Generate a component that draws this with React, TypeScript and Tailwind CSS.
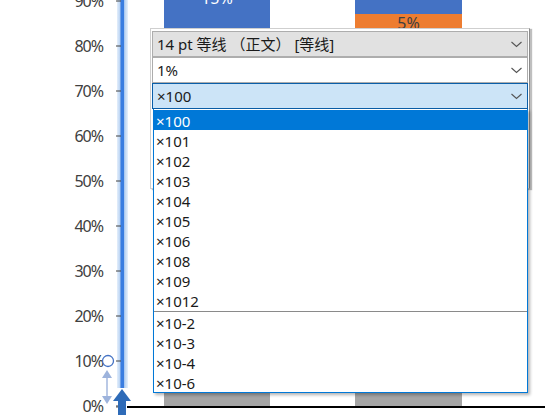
import React from 'react';

const axisLabels = ['90%', '80%', '70%', '60%', '50%', '40%', '30%', '20%', '10%', '0%'];
const upperItems = ['×100', '×101', '×102', '×103', '×104', '×105', '×106', '×108', '×109', '×1012'];
const lowerItems = ['×10-2', '×10-3', '×10-4', '×10-6'];

const uiFont = { fontFamily: '"Noto Sans", "Noto Sans CJK SC", sans-serif' };

function Chevron() {
  return (
    <svg width="11" height="7" viewBox="0 0 11 7" className="shrink-0">
      <polyline points="0.5,1 5.5,5.5 10.5,1" fill="none" stroke="#555" strokeWidth="1.1" />
    </svg>
  );
}

function AxisDecor() {
  // local x = page x - 104
  return (
    <svg width="24" height="415" viewBox="0 0 24 415" className="shrink-0 overflow-visible">
      <defs>
        <linearGradient id="band" x1="0" x2="1" y1="0" y2="0">
          <stop offset="0" stopColor="#e3eefb" />
          <stop offset="0.3" stopColor="#b6d1f2" />
          <stop offset="0.5" stopColor="#3d7fdf" />
          <stop offset="0.7" stopColor="#b6d1f2" />
          <stop offset="1" stopColor="#e8f1fc" />
        </linearGradient>
      </defs>
      <rect x="13" y="0" width="11" height="388" fill="url(#band)" />
      <rect x="16.5" y="0" width="3.5" height="388" fill="#3a7de0" />
      {axisLabels.map((l, i) => (
        <line key={l} x1="12" x2="17" y1={1 + 45 * i} y2={1 + 45 * i} stroke="#404040" strokeWidth="1" />
      ))}
      {/* resize handle */}
      <circle cx="4" cy="361" r="5.5" fill="white" stroke="#4472c4" strokeWidth="1.3" />
      <polygon points="3,370 -2,378 8,378" fill="#9db3dc" />
      <rect x="2.3" y="377" width="1.4" height="20" fill="#9db3dc" />
      <polygon points="3,404 -2,396 8,396" fill="#9db3dc" />
      {/* move arrow */}
      <polygon points="18,389 9,401 27,401" fill="#2e6bb8" />
      <rect x="14" y="400" width="8" height="15" fill="#2e6bb8" />
      <circle cx="13" cy="407" r="0.8" fill="#404040" />
    </svg>
  );
}

function Plot() {
  return (
    <div className="flex h-[415px] flex-1 flex-col">
      <div className="flex pl-[36px]">
        <div className="flex h-[28px] w-[106px] justify-center bg-[#4472c4]">
          <span className="mt-[-13px] text-[16px] leading-[22px] text-white" style={uiFont}>15%</span>
        </div>
        <div className="ml-[85px] flex w-[107px] flex-col">
          <div className="h-[14px] bg-[#4472c4]" />
          <div className="flex h-[14px] justify-center overflow-hidden bg-[#ed7d31]">
            <span className="mt-[-2px] text-[16px] leading-[22px] text-[#404040]" style={uiFont}>5%</span>
          </div>
        </div>
      </div>
      <div className="flex-1" />
      <div className="flex pl-[36px]">
        <div className="h-[13px] w-[106px] bg-[#a5a5a5]" />
        <div className="ml-[85px] h-[13px] w-[107px] bg-[#a5a5a5]" />
      </div>
      <div className="ml-[-1px] h-[1.5px] bg-black" />
      <div className="h-[7.5px]" />
    </div>
  );
}

function Combo({ text, tone }: { text: string; tone: 'gray' | 'white' | 'blue' }) {
  const cls =
    tone === 'gray'
      ? 'bg-[#e1e1e1] border-[#adadad]'
      : tone === 'white'
      ? 'bg-white border-[#adadad]'
      : 'bg-[#cce4f7] border-[#0a5ea8]';
  return (
    <div className={`flex h-[26px] w-[376px] items-center justify-between border pl-[4px] pr-[5px] ${cls}`}>
      <span className="whitespace-pre text-[15px] leading-[20px] text-[#1a1a1a]" style={uiFont}>{text}</span>
      <Chevron />
    </div>
  );
}

function Dropdown() {
  return (
    <div className="absolute left-[150px] top-[28px] h-[161px] w-[380px] border border-[#cfcfcf] border-r-[#8a8a8a] bg-white p-[1px] pt-[2px] shadow-[2px_1px_1px_rgba(0,0,0,0.25)]">
      <Combo text="14 pt 等线 （正文） [等线]" tone="gray" />
      <Combo text="1%" tone="white" />
      <Combo text="×100" tone="blue" />
      <div
        className="ml-[1px] w-[375px] border-x border-b border-[#0078d7] bg-white pt-[1px] shadow-[2px_2px_3px_rgba(0,0,0,0.3)]"
        style={uiFont}
      >
        {upperItems.map((t, i) => (
          <div
            key={t}
            className={`h-[20px] pl-[2px] text-[15px] leading-[22px] ${i === 0 ? 'bg-[#0078d7] text-white' : 'text-[#1a1a1a]'}`}
          >
            {t}
          </div>
        ))}
        <div className="mt-[1px] h-[1px] bg-[#8a8a8a]" />
        {lowerItems.map((t) => (
          <div key={t} className="h-[20px] pl-[2px] text-[15px] leading-[22px] text-[#1a1a1a]">
            {t}
          </div>
        ))}
      </div>
    </div>
  );
}

export default function App() {
  return (
    <div className="relative flex h-[415px] w-[545px] overflow-hidden bg-white">
      {/* value axis labels */}
      <div className="mt-[-21.5px] flex w-[104px] shrink-0 flex-col pr-[1px]">
        {axisLabels.map((l) => (
          <div
            key={l}
            className="flex h-[45px] shrink-0 items-center justify-end text-[16px] tracking-[-1px] text-[#404040]"
            style={uiFont}
          >
            {l}
          </div>
        ))}
      </div>
      <AxisDecor />
      <Plot />
      <Dropdown />
    </div>
  );
}
